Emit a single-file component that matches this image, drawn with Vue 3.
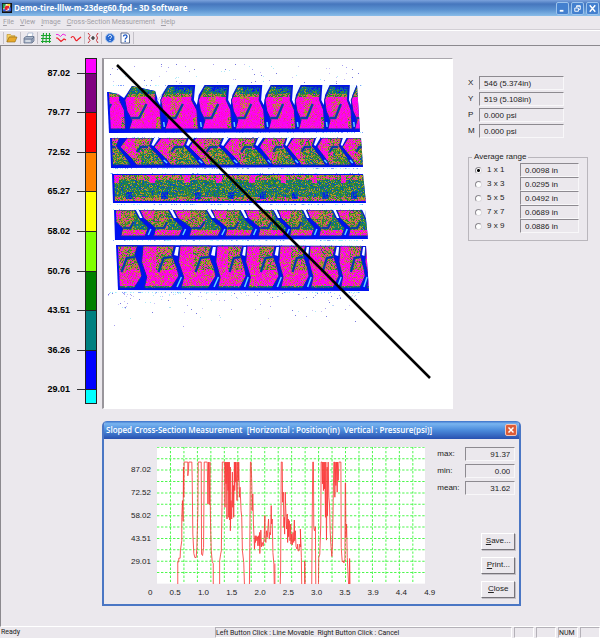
<template>
    <div class="app-window">
        <header class="title-bar">
            <svg class="app-icon" viewBox="0 0 11 11">
                <rect width="11" height="11" fill="#111" />
                <rect x="1" y="1" width="8" height="8" fill="#f4f4e8" />
                <path d="M1 1h3v2H3v3H1z" fill="#1fa34a" />
                <path d="M4 3h4v3H6v2H3V5z" fill="#e8232b" />
                <path d="M6 1h3v2H6z" fill="#ffd21c" />
                <path d="M1 7h3v2H1zM8 5h2v4H6V8h2z" fill="#2f54d8" />
            </svg>
            <h1>Demo-tire-lllw-m-23deg60.fpd - 3D Software</h1>
            <div class="window-buttons">
                <button type="button" aria-label="Minimize">
                    <svg viewBox="0 0 12 12"><path d="M3 8.500h4" stroke="#fff" stroke-width="2" /></svg>
                </button>
                <button type="button" aria-label="Restore">
                    <svg viewBox="0 0 12 12">
                        <path d="M5 5V3h4v4H7.500M5 3.500h4" fill="none" stroke="#fff" />
                        <path d="M3 5.500h4V9H3z" fill="none" stroke="#fff" />
                    </svg>
                </button>
                <button type="button" aria-label="Close window">
                    <svg viewBox="0 0 12 12"><path d="M3 2.500l6 7M9 2.500l-6 7" stroke="#fff" stroke-width="1.600" /></svg>
                </button>
            </div>
        </header>

        <nav class="menu-bar">
            <a v-for="item in menu" :key="item" href="#"><u>{{ item[0] }}</u>{{ item.slice(1) }}</a>
        </nav>

        <div class="toolbar">
            <div class="tool-group">
                <button type="button" aria-label="Open">
                    <svg viewBox="0 0 12 12">
                        <path d="M1 10V2.500h3.500l1 1.200H9V5H3.500z" fill="#f7d268" stroke="#b58a22" stroke-width=".6" />
                        <path d="M1 10l2.200-5H11L9 10z" fill="#e8a92c" stroke="#8f6a14" stroke-width=".6" />
                    </svg>
                </button>
            </div>
            <div class="tool-group">
                <button type="button" aria-label="Print">
                    <svg viewBox="0 0 12 12">
                        <path d="M4 5l1-4h5L9 5z" fill="#fff" stroke="#8aa0c0" stroke-width=".6" />
                        <path d="M1 6l2-1.500h8V9L9 11H1z" fill="#a9b6c9" stroke="#566681" stroke-width=".7" />
                        <path d="M1 7h8v3.500M9 7l2-2" fill="none" stroke="#566681" stroke-width=".7" />
                        <path d="M2.500 9h5" stroke="#fff" />
                    </svg>
                </button>
            </div>
            <div class="tool-group">
                <button type="button" aria-label="Grid">
                    <svg viewBox="0 0 12 12">
                        <path d="M3.500 1L2.500 11M6.500 1l-.5 10M9.500 1v10M1 3.500h10M1 6.500h10M1 9.500h10" stroke="#19a52c" stroke-width="1.100" />
                    </svg>
                </button>
                <button type="button" aria-label="Compare profiles">
                    <svg viewBox="0 0 12 12">
                        <path d="M1 2.500h2l2.500 2L8 2l3 1.500" fill="none" stroke="#f02ae0" />
                        <path d="M1 6h1.500L6 9.500 9 7l2 1" fill="none" stroke="#ee1c25" stroke-width="1.100" />
                    </svg>
                </button>
                <button type="button" aria-label="Profile">
                    <svg viewBox="0 0 12 12">
                        <path d="M1 6c1-2 2.500-2 3.500 0s2 4 3.500 1.500L11 5" fill="none" stroke="#ee1c25" stroke-width="1.200" />
                    </svg>
                </button>
            </div>
            <div class="tool-group">
                <button type="button" aria-label="Cross-section">
                    <svg viewBox="0 0 12 12">
                        <path d="M1 1l2 2.500-1.500 2.500L3 8.500 1 11M11 1L9.500 3.500l1 2.500-1 2.500L11 11" fill="none" stroke="#c9333a" />
                        <path d="M4 6h4M6 4v4" stroke="#222" stroke-width="1.200" />
                    </svg>
                </button>
            </div>
            <div class="tool-group">
                <button type="button" aria-label="About">
                    <svg viewBox="0 0 12 12">
                        <circle cx="6" cy="6" r="4.500" fill="#2767cf" stroke="#a6c4ee" />
                        <path d="M4.500 4.800c0-2 3-2 3 0C7.500 6 6 6 6 7M6 8v1" fill="none" stroke="#fff" />
                    </svg>
                </button>
                <button type="button" aria-label="Help">
                    <svg viewBox="0 0 12 12">
                        <path d="M2 1h6.500L10.500 3v8H2z" fill="#fff" stroke="#3b4d73" stroke-width=".8" />
                        <path d="M4.500 4.500c0-2.200 3.500-2.200 3.500 0C8 6 6.200 6 6.200 7.500M6.200 8.500V10" fill="none" stroke="#1b56c4" stroke-width="1.300" />
                    </svg>
                </button>
            </div>
        </div>

        <main class="workspace">
            <div class="top-area">
                <div class="scale">
                    <div
                        v-for="(step, index) in scaleSteps"
                        :key="index"
                        :class="['scale-step', { end: !step.label || index === 9, first: !step.label }]"
                    >
                        <span class="scale-label">{{ step.label }}</span>
                        <span class="scale-tick"></span>
                        <span class="scale-color" :style="{ backgroundColor: step.color }"></span>
                    </div>
                </div>

                <div class="map-frame">
                    <canvas ref="map" width="349" height="349"></canvas>
                </div>

                <aside class="side-panel">
                    <div class="readings">
                        <div v-for="reading in readings" :key="reading.name" class="reading">
                            <label :for="'reading-' + reading.name">{{ reading.name }}</label>
                            <input :id="'reading-' + reading.name" class="field" :value="reading.value" readonly />
                        </div>
                    </div>

                    <fieldset class="range-box">
                        <legend>Average range</legend>
                        <div v-for="range in ranges" :key="range.size" class="range-row">
                            <label>
                                <input v-model="selectedRange" type="radio" name="range" :value="range.size" />
                                {{ range.size }} x {{ range.size }}
                            </label>
                            <input class="field" :value="range.value" :aria-label="'Width for ' + range.size" readonly />
                        </div>
                    </fieldset>
                </aside>
            </div>

            <section class="dialog">
                <div class="dialog-title">
                    <h2>Sloped Cross-Section Measurement&nbsp; [Horizontal : Position(in)&nbsp; Vertical : Pressure(psi)]</h2>
                    <button type="button" aria-label="Close dialog">
                        <svg viewBox="0 0 12 12"><path d="M3 3l6 6M9 3l-6 6" stroke="#fff" stroke-width="1.700" /></svg>
                    </button>
                </div>
                <div class="dialog-body">
                    <div class="y-axis">
                        <span v-for="value in pressures" :key="value">{{ value }}</span>
                    </div>
                    <div class="chart">
                        <svg class="plot" viewBox="0 0 801 408">
                            <rect width="801" height="408" fill="#fff" />
                            <path :d="gridPath" class="grid-lines" />
                            <polyline v-for="(line, index) in profile" :key="index" :points="line" class="profile" />
                        </svg>
                        <div class="x-axis">
                            <span v-for="value in positions" :key="value">{{ value }}</span>
                        </div>
                    </div>
                    <div class="summary">
                        <div v-for="stat in stats" :key="stat.name" class="stat">
                            <label :for="'stat-' + stat.name">{{ stat.name }}:</label>
                            <input :id="'stat-' + stat.name" class="field" :value="stat.value" readonly />
                        </div>
                        <div class="actions">
                            <button type="button"><u>S</u>ave...</button>
                            <button type="button"><u>P</u>rint...</button>
                            <button type="button"><u>C</u>lose</button>
                        </div>
                    </div>
                </div>
            </section>
        </main>

        <footer class="status-bar">
            <span class="ready">Ready</span>
            <span class="pane hint">Left Button Click : Line Movable&nbsp; Right Button Click : Cancel</span>
            <span class="pane"></span>
            <span class="pane"></span>
            <span class="pane">NUM</span>
            <span class="pane"></span>
        </footer>
    </div>
</template>

<script setup>
import { onMounted, ref } from 'vue';

const menu = ['File', 'View', 'Image', 'Cross-Section Measurement', 'Help'];

const scaleSteps = [
    { color: '#ff00ff' },
    { label: '87.02', color: '#800080' },
    { label: '79.77', color: '#ff0000' },
    { label: '72.52', color: '#ff8000' },
    { label: '65.27', color: '#ffff00' },
    { label: '58.02', color: '#80ff00' },
    { label: '50.76', color: '#008000' },
    { label: '43.51', color: '#008080' },
    { label: '36.26', color: '#0000ff' },
    { label: '29.01', color: '#00ffff' },
];

const readings = [
    { name: 'X', value: '546 (5.374in)' },
    { name: 'Y', value: '519 (5.108in)' },
    { name: 'P', value: '0.000 psi' },
    { name: 'M', value: '0.000 psi' },
];

const selectedRange = ref(1);
const ranges = [
    { size: 1, value: '0.0098 in' },
    { size: 3, value: '0.0295 in' },
    { size: 5, value: '0.0492 in' },
    { size: 7, value: '0.0689 in' },
    { size: 9, value: '0.0886 in' },
];

const stats = [
    { name: 'max', value: '91.37' },
    { name: 'min', value: '0.00' },
    { name: 'mean', value: '31.62' },
];

const pressures = ['87.02', '72.52', '58.02', '43.51', '29.01'];
const positions = ['0', '0.5', '1.0', '1.5', '2.0', '2.5', '3.0', '3.5', '3.9', '4.4', '4.9'];

let gridPath = '';
for (let i = 1; i < 20; i++) gridPath += `M${i * 40.2} 0V408`;
for (let i = 0; i < 12; i++) gridPath += `M0 ${i * 34 + 1}H801`;

const profile = [
    '62,409 62,343 65,343 65,332 69,332 70,308 74,280 74,210 76,160 78,222 79,60 80,150 81,45 92,45 92,86 94,70 95,45 104,45 105,90 107,260 110,318 113,330 117,330 119,300 122,190 123,45 132,45 133,320 136,324 139,300 141,45 150,45 152,170 154,45 156,172 158,45 159,165 160,240 162,310 165,343 168,348 168,409',
    '187,409 187,340 190,320 192,310 194,180 195,45 202,45 203,180 204,45 206,110 207,45 209,215 210,45 212,130 213,45 214,210 216,45 217,218 219,60 219,250 221,160 223,215 225,75 226,180 228,115 229,210 231,45 232,130 234,45 235,105 236,45 239,160 241,45 243,100 244,45 246,150 248,120 251,190 253,210 255,310 259,345 261,409',
    '276,409 277,300 279,45 281,45 283,110 284,190 286,140 288,230 290,275 291,305 293,265 294,285 296,265 298,280 300,268 301,295 303,265 305,295 306,255 307,318 309,275 310,248 312,298 314,285 317,296 320,270 322,205 323,275 325,285 327,250 329,270 331,245 333,215 335,275 337,255 339,262 341,175 342,230 344,215 346,315 349,350 350,409',
    '352,409 352,348',
    '368,409 369,370 371,45 374,45 375,165 377,135 379,240 380,210 381,260 383,135 384,175 387,245 389,200 390,285 392,215 393,268 395,220 397,280 399,230 400,290 402,260 404,292 406,255 408,285 410,218 411,280 413,250 415,297 418,305 420,290 421,310 424,310 426,290 429,298 428,245 431,330 432,409',
    '441,409 441,340 442,409',
    '462,409 463,260 465,45 467,45 468,240 470,250 473,238 474,409',
    '482,409 483,330 486,320 489,230 490,45 493,45 494,110 495,45 497,130 498,45 500,125 501,45 503,210 504,45 505,180 506,278 508,60 509,205 511,45 513,150 515,170 517,250 519,290 522,327 524,290 526,160 528,45 530,45 531,150 532,45 534,115 536,45 538,135 539,45 541,100 543,45 549,45 550,300 553,343 556,340 558,346 561,335 562,107 563,107 564,270 566,230 568,330 572,409 575,409 575,333 576,409',
];

const map = ref(null);

// Small seeded generator so the speckle is the same on every draw
let seed = 4711;
function random() {
    seed = (seed * 1664525 + 1013904223) % 4294967296;
    return seed / 4294967296;
}

const MAGENTA = ['#ff00ff', '#ff00f0', '#fa10e0', '#ff08d0'];
const HOT = ['#e83098', '#e04078', '#c84878', '#e06058'];
const WARM = ['#d08838', '#b09020', '#a0a828', '#88a018'];
const GREEN = ['#408820', '#288038', '#509028', '#188050'];
const COOL = ['#087878', '#086898', '#1040c8', '#108080'];
const EDGE = ['#0010f0', '#0828d8', '#0818e8', '#1040c0'];

function pick(list) {
    return list[Math.floor(random() * list.length)];
}

function speckle(heat) {
    const value = heat + (random() - 0.5) * 0.6;
    if (value > 0.68) return pick(MAGENTA);
    if (value > 0.56) return pick(HOT);
    if (value > 0.36) return pick(WARM);
    if (value > 0.1) return pick(GREEN);
    if (value > -0.2) return pick(COOL);
    return pick(EDGE);
}

// Block outlines: x in fractions of the block pitch, y in pixels below the rib top
const ribs = [
    {
        top: 86,
        height: 43,
        band: [[108, 92], [118, 94], [124, 98], [132, 86], [155, 91], [158, 100], [168, 85], [357, 85], [360, 132], [110, 133]],
        starts: [97, 132, 168, 205, 238, 271, 301, 330, 357, 386],
        block: [[0, 0], [0.68, 1], [0.64, 14], [0.78, 24], [0.82, 43], [-0.08, 43], [0, 34], [-0.14, 25], [-0.2, 14]],
        hook: [[0.4, 18], [0.2, 32], [-0.02, 32]],
        cut: [[0.74, -3], [1.02, -3], [0.83, 9], [0.78, 19], [0.7, 14]],
        spot: [[0.88, 36], [0.9, 41]],
        heat: (u, y) => {
            if (y < 8) return u > 0.15 && u < 0.65 ? -0.3 + y * 0.06 : 0.15;
            if (y < 11) return 0.4;
            if (u > 0.05 && u < 0.36 && y < 32) return 0.66;
            return u > 0.66 && y > 30 ? 0.55 : 0.92;
        },
    },
    {
        top: 138,
        height: 27,
        band: [[111, 138], [361, 138], [363, 167], [112, 168]],
        starts: [96, 127, 161, 196, 231, 265, 293, 322, 348, 376],
        block: [[0, 0], [0.76, 0], [0.66, 8], [0.98, 20], [1.12, 27], [0.28, 27], [0.12, 20], [-0.2, 9]],
        hook: [[0.3, 14], [0.4, 9], [0.62, 9]],
        cut: [[0.8, 0], [0.94, 0], [0.78, 8], [0.72, 7]],
        spot: [[1.08, 22], [1.18, 25]],
        heat: (u, y) => (u < 0.22 && y < 20 ? 0.76 : y > 10 && u > 0.4 ? 0.3 : 0.52),
    },
    {
        top: 174,
        height: 27,
        band: [[113, 174], [363, 174], [366, 203], [114, 203]],
        starts: [113, 149, 184, 216, 249, 281, 312, 341, 370],
        block: [[0, 1], [1.02, 1], [1.02, 27], [0, 27]],
        heat: (u, y) => {
            if (y < 9 && u < 0.16) return 0.78;
            if (y > 17 && y < 25 && u > 0.34 && u < 0.52) return -0.25;
            if (y < 6 || y > 22) return 0.46;
            return 0.16;
        },
    },
    {
        top: 210,
        height: 27,
        band: [[115, 210], [365, 210], [368, 239], [116, 240]],
        starts: [76, 108, 140, 174, 212, 245, 278, 307, 337, 366],
        block: [[0, 0], [0.84, 0], [0.96, 8], [1.26, 18], [1.16, 26], [0.4, 26], [0.46, 18], [0.1, 8]],
        hook: [[0.48, 18], [0.7, 18], [0.8, 12]],
        cut: [[0.87, 0], [0.96, 0], [1.08, 8], [1, 8]],
        spot: [[1.34, 19], [1.26, 25]],
        heat: (u, y) => (y > 19 || (u < 0.4 && y < 9) ? 0.7 : u > 0.8 ? 0.14 : 0.42),
    },
    {
        top: 246,
        height: 43,
        band: [[117, 245], [366, 246], [369, 291], [119, 290]],
        starts: [106, 143, 180, 217, 247, 280, 310, 340, 366, 392],
        block: [[0, 0], [0.85, 0], [0.78, 9], [0.92, 22], [0.97, 30], [0.76, 42], [0.03, 42], [0.1, 31], [-0.04, 16]],
        hook: [[0.78, 11], [0.56, 12], [0.42, 26]],
        cut: [[0.89, 1], [0.97, 1], [0.94, 10], [0.84, 9]],
        spot: [[1.04, 31], [0.92, 41]],
        heat: (u, y) => (y > 39 ? 0.15 : u > 0.35 && y < 24 ? 0.5 : 0.78),
    },
];

function tracePath(ctx, points) {
    ctx.beginPath();
    points.forEach(([x, y]) => ctx.lineTo(x, y));
}

function strokeLine(ctx, points, color, width) {
    tracePath(ctx, points);
    ctx.strokeStyle = color;
    ctx.lineWidth = width;
    ctx.stroke();
}

function drawRib(ctx, rib) {
    ctx.save();
    tracePath(ctx, rib.band);
    ctx.closePath();
    ctx.clip();
    ctx.fillStyle = '#0010f0';
    ctx.fillRect(100, rib.top - 6, 280, rib.height + 12);

    for (let i = 0; i < rib.starts.length - 1; i++) {
        const start = rib.starts[i];
        const pitch = rib.starts[i + 1] - start;
        const place = (points) => points.map(([u, y]) => [start + u * pitch, rib.top + y]);

        ctx.save();
        tracePath(ctx, place(rib.block));
        ctx.closePath();
        ctx.clip();
        for (let y = 0; y <= rib.height; y++) {
            for (let x = Math.floor(-pitch * 0.3); x < pitch * 1.4; x++) {
                ctx.fillStyle = speckle(rib.heat(x / pitch, y));
                ctx.fillRect(start + x, rib.top + y, 1, 1);
            }
        }
        ctx.restore();
        if (!rib.hook) continue;

        tracePath(ctx, place(rib.block));
        ctx.closePath();
        ctx.strokeStyle = '#0828b0';
        ctx.lineWidth = 1;
        ctx.stroke();
        strokeLine(ctx, place(rib.hook), '#208048', 2.5);
        strokeLine(ctx, place(rib.hook), '#0828c8', 1.5);
        if (i > 0) {
            tracePath(ctx, place(rib.cut));
            ctx.fillStyle = '#f4fcff';
            ctx.fill();
            strokeLine(ctx, place(rib.spot), '#60d8ff', 1.5);
        }
    }
    ctx.restore();
    strokeLine(ctx, [rib.band[0], rib.band[rib.band.length - 1]], '#0010f0', 2);
}

function drawDust(ctx) {
    const colors = ['#a8a0f0', '#b0e8f8', '#c8c0f8', '#7878e0'];
    for (let i = 0; i < 190; i++) {
        const x = 108 + random() * 255;
        const y = random() < 0.3 ? 64 + random() * 20 : 293 + random() * random() * 36;
        ctx.fillStyle = pick(colors);
        ctx.fillRect(Math.floor(x), Math.floor(y), 1, 1);
    }
    // Faint spill along both sides of every rib
    ribs.forEach((rib) => {
        for (let i = 0; i < 170; i++) {
            const x = 110 + random() * 253;
            ctx.fillStyle = pick(['#a0f0ff', '#80a0ff', '#c8f8ff']);
            ctx.fillRect(Math.floor(x), rib.top + (random() < 0.3 ? -1 : rib.height + 3), 1, 1);
        }
    });
}

onMounted(() => {
    const ctx = map.value.getContext('2d');
    ctx.fillStyle = '#fff';
    ctx.fillRect(0, 0, 349, 349);
    ctx.translate(-104, -59);
    drawDust(ctx);
    ribs.forEach((rib) => drawRib(ctx, rib));
    strokeLine(ctx, [[117, 65], [430, 378]], '#000', 2.5);
});
</script>

<style>
body {
    margin: 0;
}
</style>

<style scoped>
.app-window {
    display: flex;
    flex-direction: column;
    min-height: 100vh;
    background: #ebe8ed;
    color: #222;
    font-family: "Liberation Sans", Arial, sans-serif;
    font-size: 8px;
    line-height: 10px;
}

button,
input {
    box-sizing: border-box;
    margin: 0;
    padding: 0;
    border: 0;
    background: none;
    color: inherit;
    font: inherit;
}

h1,
h2 {
    margin: 0;
    color: #fff;
    font-family: "Open Sans", sans-serif;
    white-space: nowrap;
}

svg {
    display: block;
}

.title-bar {
    display: flex;
    align-items: center;
    height: 16px;
    padding: 0 1px 0 2px;
    background: linear-gradient(#7ba2dc, #4676bd 25%, #5a91d0 60%, #8abde9);
}

.app-icon {
    width: 10px;
    height: 10px;
    margin-right: 2px;
}

h1 {
    flex: 1;
    font-size: 8px;
    font-weight: 700;
}

.window-buttons {
    display: flex;
    gap: 2px;
}

.window-buttons button {
    width: 13px;
    height: 13px;
    border: 1px solid #9cc3ec;
    border-radius: 2px;
    background: #4380cf;
}

.menu-bar {
    display: flex;
    gap: 6px;
    height: 13px;
    padding: 0 3px;
    border-bottom: 1px solid #d2cfd5;
    font-family: Roboto, sans-serif;
    font-size: 7px;
    line-height: 12px;
}

.menu-bar a {
    color: #a19ea5;
    text-decoration: none;
}

.toolbar {
    display: flex;
    align-items: center;
    height: 14px;
    padding-left: 3px;
    border-top: 1px solid #fff;
}

.tool-group {
    display: flex;
    gap: 3px;
    height: 12px;
    padding: 0 2px;
    border-left: 1px solid #c4c1c8;
}

.tool-group:last-child {
    border-right: 1px solid #c4c1c8;
}

.tool-group button {
    width: 12px;
    height: 12px;
}

.workspace {
    flex: 1;
    padding-top: 12px;
    border-top: 1px solid #8b898e;
    border-left: 1px solid #8b898e;
    border-bottom: 1px solid #fff;
}

.top-area {
    display: grid;
    grid-template-columns: 101px 351px 1fr;
}

.scale {
    display: flex;
    flex-direction: column;
    width: 96px;
    height: 346px;
}

.scale-step {
    display: grid;
    grid-template-columns: 1fr 8px 12px;
    flex: 8;
}

.scale-step.end {
    flex: 3;
}

.scale-label {
    margin-top: -5px;
    padding-right: 7px;
    color: #000;
    font-size: 9px;
    font-weight: 700;
    text-align: right;
}

.scale-tick {
    height: 1px;
    background: #333;
}

.first .scale-tick {
    background: none;
}

.scale-color {
    border: 1px solid #222;
    border-bottom: 0;
}

.scale-step:last-child .scale-color {
    border-bottom: 1px solid #222;
}

.map-frame {
    border: 1px solid #aaa7ad;
    border-right-color: #fff;
    border-bottom-color: #fff;
    border-left: 2px solid #99969c;
}

.map-frame canvas {
    display: block;
}

.side-panel {
    padding: 18px 12px 0 15px;
}

.field {
    width: 100%;
    height: 14px;
    padding: 0 4px;
    border: 1px solid #8d8a90;
    border-right-color: #f8f7f9;
    border-bottom-color: #f8f7f9;
}

.readings {
    display: flex;
    flex-direction: column;
    gap: 2px;
    padding-right: 24px;
}

.reading {
    display: grid;
    grid-template-columns: 11px 1fr;
    align-items: center;
}

.range-box {
    min-width: 0;
    margin: 14px 0 0;
    padding: 1px 8px 7px 6px;
    border: 1px solid #b9b6bc;
}

.range-box legend {
    margin-left: -3px;
    padding: 0 2px;
}

.range-row {
    display: grid;
    grid-template-columns: 45px 1fr;
    align-items: center;
}

.range-row label {
    display: flex;
    align-items: center;
    gap: 5px;
}

.range-row input[type="radio"] {
    width: 7px;
    height: 7px;
    appearance: none;
    border: 1px solid #8d8a90;
    border-right-color: #dddadf;
    border-bottom-color: #dddadf;
    border-radius: 50%;
    background: #fff;
}

.range-row input[type="radio"]:checked {
    background: radial-gradient(circle, #000 0 1px, #fff 2px);
}

.dialog {
    width: 70%;
    box-sizing: border-box;
    margin: 12px 0 0 101px;
    border: 2px solid #4a76c4;
    border-top: 0;
    border-radius: 5px 5px 0 0;
    overflow: hidden;
}

.dialog-title {
    display: flex;
    align-items: center;
    justify-content: space-between;
    height: 18px;
    padding: 0 2px;
    background: linear-gradient(#3a70c8, #78b4f0 15%, #4c8cdc 50%, #2850b0);
}

.dialog-title h2 {
    font-size: 8px;
    font-weight: 600;
}

.dialog-title button {
    width: 12px;
    height: 12px;
    border: 1px solid #f3c5b8;
    border-radius: 2px;
    background: #dc5c38;
}

.dialog-title button svg {
    width: 10px;
    height: 10px;
}

.dialog-body {
    display: flex;
    padding: 8px 4px 6px 0;
}

.y-axis {
    display: flex;
    flex-direction: column;
    gap: 13px;
    width: 50px;
    padding: 18px 3px 0 0;
    box-sizing: border-box;
    text-align: right;
}

.chart {
    flex: 1;
    margin-left: 3px;
}

.plot {
    width: 100%;
}

.grid-lines {
    fill: none;
    stroke: #4cf84c;
    stroke-width: 3;
    stroke-dasharray: 7 5;
}

.profile {
    fill: none;
    stroke: #fa3838;
    stroke-width: 2.5;
}

.x-axis {
    display: flex;
    justify-content: space-between;
    margin: 4px -10px 0 -9px;
}

.summary {
    display: flex;
    flex-direction: column;
    gap: 3px;
    width: 78px;
    margin-left: 12px;
}

.stat {
    display: grid;
    grid-template-columns: 28px 50px;
    align-items: center;
}

.stat .field {
    text-align: right;
}

.actions {
    display: flex;
    flex-direction: column;
    align-items: flex-end;
    gap: 7px;
    margin-top: auto;
}

.actions button {
    width: 34px;
    height: 17px;
    border: 1px solid #fff;
    border-right-color: #77747a;
    border-bottom-color: #77747a;
    box-shadow: 1px 1px #c4c1c7;
}

.status-bar {
    display: flex;
    gap: 2px;
    height: 11px;
    font-family: Roboto, sans-serif;
    font-size: 7px;
    line-height: 10px;
}

.ready {
    width: 213px;
    padding-left: 1px;
    box-sizing: border-box;
}

.pane {
    width: 18px;
    border: 1px solid #b4b1b8;
    border-right-color: #fff;
    border-bottom-color: #fff;
}

.pane.hint {
    flex: 1;
}
</style>
